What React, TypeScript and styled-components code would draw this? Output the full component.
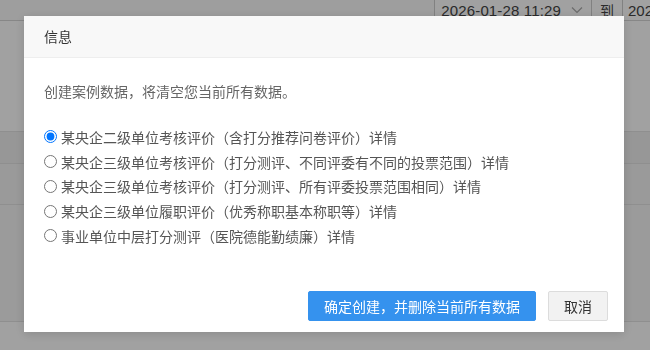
import styled, { createGlobalStyle } from "styled-components";

const GlobalStyle = createGlobalStyle`
  html, body {
    margin: 0;
    padding: 0;
  }
  body {
    width: 650px;
    height: 350px;
    overflow: hidden;
    font-family: "Noto Sans CJK SC", "Noto Sans", "Liberation Sans", sans-serif;
    font-size: 14px;
    color: #333;
  }
`;

const Page = styled.div`
  height: 350px;
  background: #fff;
  display: flex;
  flex-direction: column;
`;

const TopBar = styled.div`
  height: 24px;
  display: flex;
  justify-content: flex-end;
  border-bottom: 1px solid #d6d6d6;
  background: #fafafa;
`;

const DateBox = styled.div`
  display: flex;
  align-items: center;
  gap: 10px;
  padding: 0 8px 0 6px;
  border-left: 1px solid #ccc;
  border-right: 1px solid #ccc;
  font-family: "Liberation Sans", sans-serif;
  font-size: 15px;
  letter-spacing: 0.15px;
  color: #444;
  background: #fff;
`;

const Sep = styled.div`
  padding: 0 8px;
  display: flex;
  align-items: center;
  border-right: 1px solid #ccc;
  color: #444;
  font-size: 14px;
  background: #fff;
`;

const DateTail = styled.div`
  width: 22px;
  padding-left: 5px;
  display: flex;
  align-items: center;
  font-family: "Liberation Sans", sans-serif;
  font-size: 15px;
  color: #444;
  overflow: hidden;
  white-space: nowrap;
  background: #fff;
`;

const Content = styled.div`
  flex: 1;
  display: flex;
  flex-direction: column;
  background: #f2f2f2;
`;

const Row = styled.div<{ $h: number; $bg: string }>`
  height: ${(p) => p.$h}px;
  background: ${(p) => p.$bg};
  border-bottom: 1px solid #e2e2e2;
`;

const Overlay = styled.div`
  position: fixed;
  inset: 0;
  background: rgba(0, 0, 0, 0.37);
  padding: 16px 0 0 24px;
`;

const Dialog = styled.div`
  width: 600px;
  height: 316px;
  background: #fff;
  box-shadow: 0 2px 10px rgba(0, 0, 0, 0.15);
  display: flex;
  flex-direction: column;
`;

const Header = styled.div`
  height: 41px;
  line-height: 41px;
  padding: 0 20px;
  background: #f8f8f8;
  border-bottom: 1px solid #eee;
  color: #333;
  font-size: 14px;
`;

const Body = styled.div`
  padding: 23px 20px 0;
`;

const Desc = styled.div`
  line-height: 20px;
  color: #666;
  font-size: 14px;
`;

const Options = styled.div`
  margin-top: 23.5px;
  display: flex;
  flex-direction: column;
`;

const Option = styled.label`
  height: 24.75px;
  display: flex;
  align-items: center;
  color: #555;
  font-size: 14px;
  white-space: nowrap;
`;

const Radio = styled.input`
  width: 13px;
  height: 13px;
  margin: 0 4px 0 0;
`;

const Footer = styled.div`
  margin-top: auto;
  padding: 0 16px 11px;
  display: flex;
  justify-content: flex-end;
  gap: 12px;
`;

const Button = styled.button<{ $primary?: boolean }>`
  height: 30px;
  padding: 0 15px;
  border-radius: 2px;
  font-family: inherit;
  font-size: 14px;
  border: 1px solid ${(p) => (p.$primary ? "#3592ee" : "#dcdcdc")};
  background: ${(p) => (p.$primary ? "#3592ee" : "#f2f2f2")};
  color: ${(p) => (p.$primary ? "#fff" : "#333")};
  cursor: pointer;
`;

const options = [
  "某央企二级单位考核评价（含打分推荐问卷评价）详情",
  "某央企三级单位考核评价（打分测评、不同评委有不同的投票范围）详情",
  "某央企三级单位考核评价（打分测评、所有评委投票范围相同）详情",
  "某央企三级单位履职评价（优秀称职基本称职等）详情",
  "事业单位中层打分测评（医院德能勤绩廉）详情",
];

const App = () => {
  return (
    <>
      <GlobalStyle />
      <Page>
        <TopBar>
          <DateBox>
            <span>2026-01-28 11:29</span>
            <svg width="12" height="8" viewBox="0 0 12 8" fill="none">
              <path d="M1 1.5 6 6.5 11 1.5" stroke="#aaa" strokeWidth="1.2" />
            </svg>
          </DateBox>
          <Sep>到</Sep>
          <DateTail>2026</DateTail>
        </TopBar>
        <Content>
          <Row $h={110} $bg="#fff" />
          <Row $h={31} $bg="#f0f0f0" />
          <Row $h={40} $bg="#f4f4f4" />
          <Row $h={116} $bg="#f6f6f6" />
          <Row $h={30} $bg="#fff" />
        </Content>
      </Page>
      <Overlay>
        <Dialog>
          <Header>信息</Header>
          <Body>
            <Desc>创建案例数据，将清空您当前所有数据。</Desc>
            <Options>
              {options.map((text, i) => (
                <Option key={text}>
                  <Radio type="radio" name="case" defaultChecked={i === 0} />
                  {text}
                </Option>
              ))}
            </Options>
          </Body>
          <Footer>
            <Button $primary>确定创建，并删除当前所有数据</Button>
            <Button>取消</Button>
          </Footer>
        </Dialog>
      </Overlay>
    </>
  );
};

export default App;
